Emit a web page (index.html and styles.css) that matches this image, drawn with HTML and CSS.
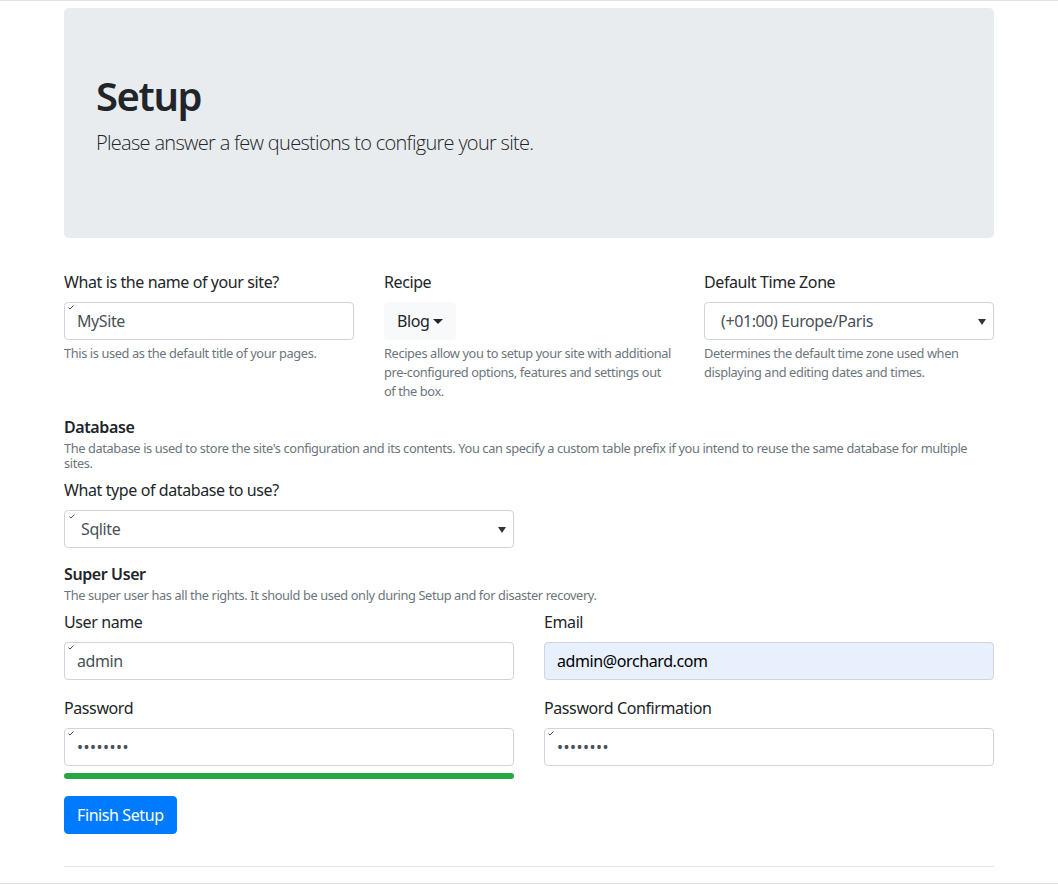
FILE: index.html
```html
<!DOCTYPE html>
<html lang="en">
<head>
<meta charset="utf-8">
<title>Setup</title>
<link rel="stylesheet" href="styles.css">
</head>
<body>
<div class="page">
  <div class="container">
    <div class="jumbotron">
      <h1 class="title">Setup</h1>
      <p class="lead">Please answer a few questions to configure your site.</p>
    </div>

    <form class="setup-form">
      <div class="grid grid-3">
        <div class="form-group">
          <label class="label">What is the name of your site?</label>
          <div class="field">
            <input class="input" type="text" value="MySite">
            <svg class="tick" width="6" height="5" viewBox="0 0 6 5"><path d="M0.5 2.6L2 4L5.5 0.6" fill="none" stroke="#333" stroke-width="0.9"/></svg>
          </div>
          <small class="help">This is used as the default title of your pages.</small>
        </div>
        <div class="form-group">
          <label class="label">Recipe</label>
          <div>
            <button type="button" class="btn btn-light">Blog<span class="caret"></span></button>
          </div>
          <small class="help">Recipes allow you to setup your site with additional pre-configured options, features and settings out of the box.</small>
        </div>
        <div class="form-group">
          <label class="label">Default Time Zone</label>
          <div class="select">
            <span class="select-text">(+01:00) Europe/Paris</span>
            <svg class="select-arrow" width="8" height="6" viewBox="0 0 8 6"><path d="M0 0H8L4 6Z" fill="#333"/></svg>
          </div>
          <small class="help">Determines the default time zone used when displaying and editing dates and times.</small>
        </div>
      </div>

      <h6 class="section-title">Database</h6>
      <small class="section-desc">The database is used to store the site's configuration and its contents. You can specify a custom table prefix if you intend to reuse the same database for multiple sites.</small>
      <div class="grid grid-2">
        <div class="form-group">
          <label class="label">What type of database to use?</label>
          <div class="select field">
            <span class="select-text">Sqlite</span>
            <svg class="select-arrow" width="8" height="6" viewBox="0 0 8 6"><path d="M0 0H8L4 6Z" fill="#333"/></svg>
            <svg class="tick" width="6" height="5" viewBox="0 0 6 5"><path d="M0.5 2.6L2 4L5.5 0.6" fill="none" stroke="#333" stroke-width="0.9"/></svg>
          </div>
        </div>
      </div>

      <h6 class="section-title section-title-user">Super User</h6>
      <small class="section-desc section-desc-user">The super user has all the rights. It should be used only during Setup and for disaster recovery.</small>
      <div class="grid grid-2">
        <div class="form-group">
          <label class="label">User name</label>
          <div class="field">
            <input class="input" type="text" value="admin">
            <svg class="tick" width="6" height="5" viewBox="0 0 6 5"><path d="M0.5 2.6L2 4L5.5 0.6" fill="none" stroke="#333" stroke-width="0.9"/></svg>
          </div>
        </div>
        <div class="form-group">
          <label class="label">Email</label>
          <div class="field">
            <input class="input input-autofill" type="text" value="admin@orchard.com">
          </div>
        </div>
        <div class="form-group">
          <label class="label">Password</label>
          <div class="field">
            <input class="input input-password" type="password" value="password">
            <svg class="tick" width="6" height="5" viewBox="0 0 6 5"><path d="M0.5 2.6L2 4L5.5 0.6" fill="none" stroke="#333" stroke-width="0.9"/></svg>
          </div>
          <div class="strength"><div class="strength-bar" style="width:100%"></div></div>
        </div>
        <div class="form-group">
          <label class="label">Password Confirmation</label>
          <div class="field">
            <input class="input input-password" type="password" value="password">
            <svg class="tick" width="6" height="5" viewBox="0 0 6 5"><path d="M0.5 2.6L2 4L5.5 0.6" fill="none" stroke="#333" stroke-width="0.9"/></svg>
          </div>
        </div>
      </div>

      <div class="form-group">
        <button type="button" class="btn btn-primary">Finish Setup</button>
      </div>
    </form>
    <hr class="rule">
  </div>
</div>
</body>
</html>
```

FILE: styles.css
```css
* { box-sizing: border-box; }

html, body {
  margin: 0;
  padding: 0;
  background: #fff;
}

body {
  font-family: "Segoe UI", "Noto Sans", "Open Sans", sans-serif;
  font-size: 16px;
  line-height: 1.5;
  letter-spacing: -0.025em;
  color: #212529;
}

.page {
  min-height: 884px;
  border-top: 1px solid #e3e3e3;
  border-bottom: 1px solid #e3e3e3;
  padding-top: 7px;
}

.container {
  width: 930px;
  margin: 0 auto;
}

.jumbotron {
  background: #e9ecef;
  border-radius: 4.8px;
  padding: 64px 32px;
  margin-bottom: 32px;
}

.title {
  margin: 0 0 8px;
  font-size: 40px;
  line-height: 1.2;
  font-weight: 600;
  letter-spacing: -0.035em;
}

.lead {
  margin: 0 0 16px;
  font-family: "Segoe UI", "Open Sans", "Noto Sans", sans-serif;
  font-size: 20px;
  font-weight: 300;
  line-height: 1.5;
  letter-spacing: -0.035em;
}

.setup-form { margin: 0; }

.grid {
  display: grid;
  column-gap: 30px;
}
.grid-3 { grid-template-columns: repeat(3, 1fr); }
.grid-2 { grid-template-columns: repeat(2, 1fr); }

.form-group { margin-bottom: 16px; }

.label {
  display: inline-block;
  margin-bottom: 8px;
}

.field { position: relative; }

.input {
  display: block;
  width: 100%;
  height: 38px;
  padding: 6px 12px;
  font-family: inherit;
  font-size: 16px;
  line-height: 1.5;
  letter-spacing: inherit;
  color: #495057;
  background: #fff;
  border: 1px solid #ced4da;
  border-radius: 4px;
  margin: 0;
}

.input-autofill {
  background: #e8f0fe;
  color: #000;
}

.input-password {
  letter-spacing: 0.5px;
  color: #495057;
  font-size: 16px;
}

.tick {
  position: absolute;
  left: 4px;
  top: 3px;
  pointer-events: none;
}

.help {
  display: block;
  margin-top: 4px;
  font-size: 12.8px;
  line-height: 1.5;
  letter-spacing: -0.03em;
  color: #6c757d;
}

.btn {
  display: inline-flex;
  align-items: center;
  height: 38px;
  padding: 6px 12px;
  font-family: inherit;
  font-size: 16px;
  line-height: 1.5;
  letter-spacing: inherit;
  border: 1px solid transparent;
  border-radius: 4px;
  cursor: pointer;
}

.btn-light {
  background: #f8f9fa;
  border-color: #f8f9fa;
  color: #212529;
}

.btn-primary {
  background: #007bff;
  border-color: #007bff;
  color: #fff;
}

.caret {
  display: inline-block;
  margin-left: 4px;
  width: 0;
  height: 0;
  border-top: 5px solid #212529;
  border-left: 5px solid transparent;
  border-right: 5px solid transparent;
}

.select {
  position: relative;
  display: flex;
  align-items: center;
  height: 38px;
  padding: 0 28px 0 16px;
  border: 1px solid #ced4da;
  border-radius: 4px;
  background: #fff;
  color: #495057;
}

.select-arrow {
  position: absolute;
  right: 7px;
  top: 16px;
}

.section-title {
  margin: 0;
  font-size: 16px;
  font-weight: 600;
  line-height: 1.2;
}

.section-title-user { margin-top: 1px; }

.section-desc {
  display: block;
  font-size: 12.8px;
  line-height: 1.2;
  letter-spacing: -0.03em;
  color: #6c757d;
  margin: 4px 0 7px;
}

.section-desc-user { margin: 3px 0 7px; }

.strength {
  margin-top: 7px;
  margin-bottom: 1px;
  height: 6px;
  border-radius: 3px;
  background: #e9ecef;
  overflow: hidden;
}

.strength-bar {
  height: 100%;
  background: #28a745;
}

.rule {
  margin: 32px 0 0;
  border: 0;
  border-top: 1px solid rgba(0, 0, 0, 0.1);
}
```
